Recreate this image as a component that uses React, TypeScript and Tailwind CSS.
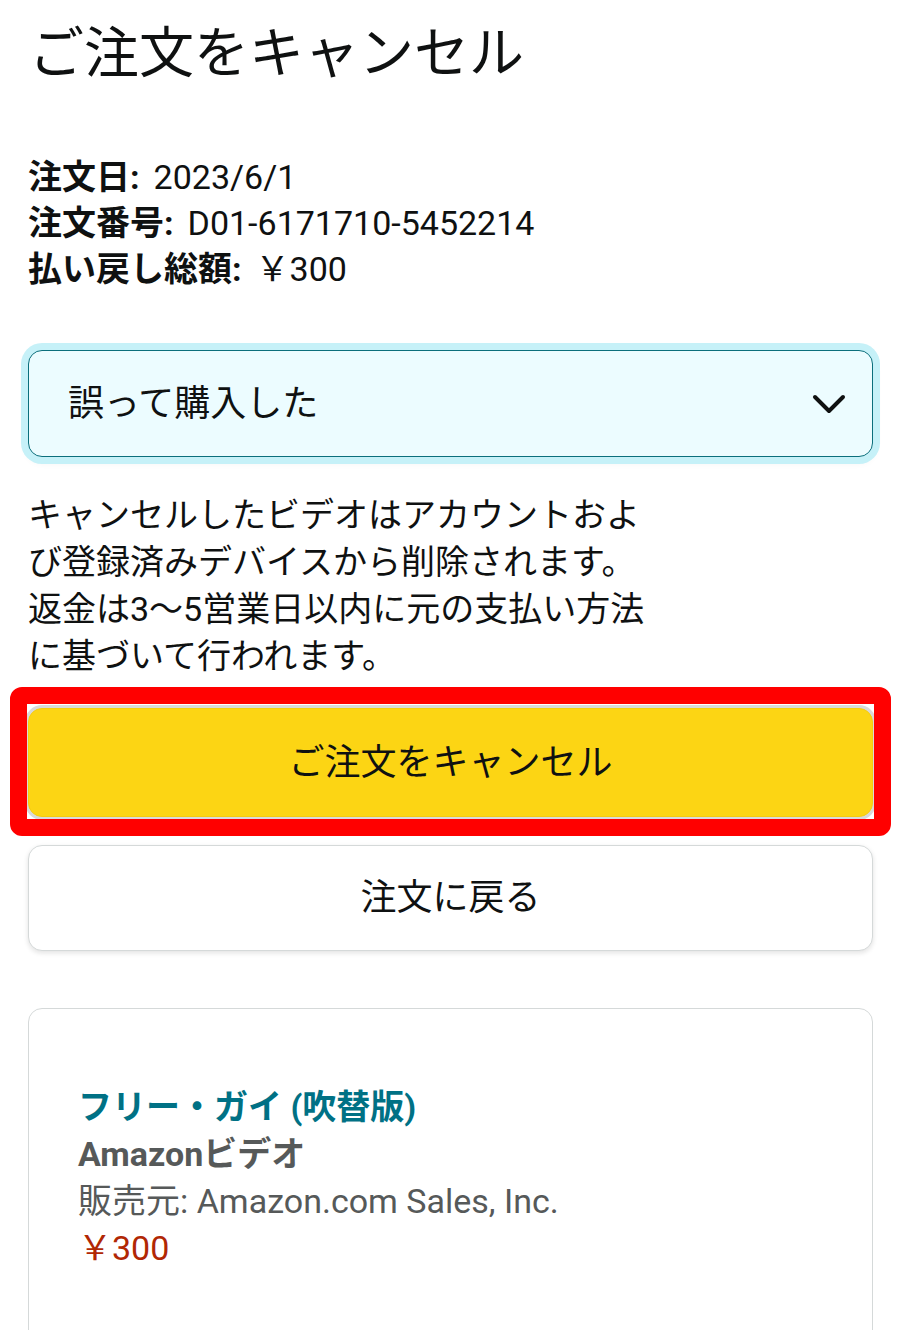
import React from "react";

const font = { fontFamily: 'Roboto, "Noto Sans CJK JP", sans-serif' };

export default function App() {
  return (
    <div className="w-[900px] h-[1330px] overflow-hidden bg-white text-[#0f1111]" style={font}>
      <div className="flex flex-col pl-[28px] pr-[27px] pt-[22px]">
        <h1 className="text-[55px] leading-[62px] font-normal pl-[1px]">ご注文をキャンセル</h1>

        <div className="mt-[70px] text-[34px] leading-[46px]">
          <div><span className="font-bold">注文日:</span><span className="ml-[14px]">2023/6/1</span></div>
          <div><span className="font-bold">注文番号:</span><span className="ml-[14px]">D01-6171710-5452214</span></div>
          <div><span className="font-bold">払い戻し総額:</span><span className="ml-[14px]">￥300</span></div>
        </div>

        <div className="mt-[58px] h-[107px] rounded-[14px] border-[1.5px] border-[#0b6f7c] bg-[#ecfcff] shadow-[0_0_0_7px_#c6f1f8,0_4px_10px_rgba(0,0,0,0.08)] flex items-center justify-between pl-[39px] pr-[26px]">
          <span className="text-[36px]">誤って購入した</span>
          <svg width="34" height="22" viewBox="0 0 34 22" fill="none">
            <path d="M3 4 L17 18 L31 4" stroke="#0f1111" strokeWidth="4" strokeLinecap="round" strokeLinejoin="round" />
          </svg>
        </div>

        <p className="mt-[35px] text-[34px] leading-[47px]">
          キャンセルしたビデオはアカウントおよ<br />
          び登録済みデバイスから削除されます。<br />
          返金は3〜5営業日以内に元の支払い方法<br />
          に基づいて行われます。
        </p>

        <div className="relative mt-[28px]">
          <button className="w-full h-[109px] rounded-[14px] bg-[#fcd514] border border-[#f5cc10] shadow-[0_0_0_3px_#d9d9d9] text-[36px] text-[#0f1111] flex items-center justify-center">
            ご注文をキャンセル
          </button>
          <div className="absolute -left-[18px] -right-[18px] -top-[21px] -bottom-[19px] border-[17px] border-[#ff0000] rounded-[12px] pointer-events-none"></div>
        </div>

        <button className="mt-[28px] w-full h-[106px] rounded-[14px] bg-white border border-[#d5d9d9] shadow-[0_2px_5px_rgba(15,17,17,0.12)] text-[36px] text-[#0f1111] flex items-center justify-center">
          注文に戻る
        </button>

        <div className="mt-[57px] h-[400px] rounded-[14px] border border-[#d5d9d9] pt-[75px] pl-[49px] text-[34px] leading-[47px]">
          <div className="font-bold text-[#007185]">フリー・ガイ (吹替版)</div>
          <div className="font-bold text-[#565959]">Amazonビデオ</div>
          <div className="text-[#565959]">販売元: Amazon.com Sales, Inc.</div>
          <div className="text-[#b12704]">￥300</div>
        </div>
      </div>
    </div>
  );
}
